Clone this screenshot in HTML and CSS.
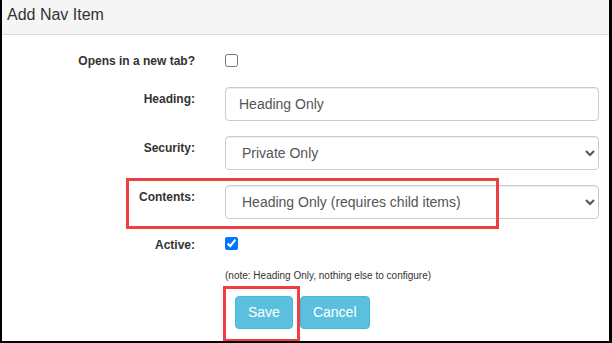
FILE: index.html
```html
<!DOCTYPE html>
<html lang="en">
<head>
    <meta charset="UTF-8">
    <title>Add Nav Item</title>
    <link rel="stylesheet" href="styles.css">
</head>
<body>
    <div class="modal-frame">
        <div class="modal-header">
            <h4 class="modal-title">Add Nav Item</h4>
        </div>

        <form class="nav-form">
            <div class="form-row row-check">
                <label class="form-label">Opens in a new tab?</label>
                <div class="form-control-col"><input type="checkbox" class="form-check"></div>
            </div>
            <div class="form-row">
                <label class="form-label">Heading:</label>
                <div class="form-control-col"><input type="text" class="form-input" value="Heading Only"></div>
            </div>
            <div class="form-row">
                <label class="form-label">Security:</label>
                <div class="form-control-col">
                    <select class="form-input form-select">
                        <option>Private Only</option>
                    </select>
                </div>
            </div>
            <div class="form-row row-contents">
                <label class="form-label">Contents:</label>
                <div class="form-control-col">
                    <select class="form-input form-select">
                        <option>Heading Only (requires child items)</option>
                    </select>
                </div>
                <span class="highlight-box highlight-contents"></span>
            </div>
            <div class="form-row row-check row-active">
                <label class="form-label">Active:</label>
                <div class="form-control-col"><input type="checkbox" class="form-check" checked></div>
            </div>
            <div class="form-row row-note">
                <span></span>
                <p class="form-note">(note: Heading Only, nothing else to configure)</p>
            </div>
            <div class="form-row row-actions">
                <span></span>
                <div class="action-buttons">
                    <button type="button" class="btn-info">Save</button>
                    <button type="button" class="btn-info">Cancel</button>
                    <span class="highlight-box highlight-save"></span>
                </div>
            </div>
        </form>
    </div>
</body>
</html>
```

FILE: styles.css
```css
:root {
    --text-color: #333; --input-text: #555;
    --input-border: #ccc; --info-bg: #5bc0de; --info-border: #46b8da;
    --highlight: #ef3f42;
}
* { margin: 0; padding: 0; box-sizing: border-box; }
body { font-family: "Liberation Sans", Arial, sans-serif; color: var(--text-color); background: #fff; width: 612px; height: 343px; overflow: hidden; }

.modal-frame {
    width: 612px; height: 343px; background: #fff; position: relative;
    border-left: 2px solid #000; border-right: 3px solid #000; border-bottom: 2px solid #000;
    overflow: hidden;
}
.modal-header { height: 35px; background: #f5f5f5; border-bottom: 1px solid #ddd; padding: 0 5px; }
.modal-title { font-size: 16px; font-weight: 400; line-height: 18px; padding-top: 6px; color: #333; }

.nav-form { padding-top: 19px; }
.form-row {
    display: grid; grid-template-columns: 193px 374px; column-gap: 30px;
    align-items: start; margin-bottom: 15px; position: relative;
}
.form-label { font-size: 12px; font-weight: 700; line-height: 17px; text-align: right; padding-top: 4px; }
.row-check { height: 13px; margin-bottom: 20px; }
.row-check .form-label { padding-top: 0; line-height: 15px; }
.row-contents { margin-bottom: 18px; }
.row-active { margin-bottom: 0; }
.row-active .form-label { padding-top: 1px; }

.form-check { display: block; width: 13px; height: 13px; margin: 0; }
.form-input {
    display: block; width: 100%; height: 34px; padding: 6px 13px; font-family: inherit;
    font-size: 14px; color: var(--input-text); background: #fff;
    border: 1px solid var(--input-border); border-radius: 4px;
    box-shadow: inset 0 1px 1px rgba(0,0,0,0.075);
}
.form-select { padding: 6px 12px; }

.row-note { margin-top: 20px; margin-bottom: 14px; }
.form-note { font-size: 10px; line-height: 12px; color: #333; }

.action-buttons { display: flex; gap: 7px; margin-left: 10px; position: relative; }
.btn-info {
    height: 33px; padding: 6px 12px; font-family: inherit; font-size: 14px; line-height: 19px;
    color: #fff; background: var(--info-bg); border: 1px solid var(--info-border); border-radius: 4px;
}

/* red callouts drawn over the form */
.highlight-box { position: absolute; border: 3px solid var(--highlight); pointer-events: none; }
.highlight-contents { left: 124px; top: -7px; width: 373px; height: 51px; }
.highlight-save { left: -12px; top: -10px; width: 77px; height: 56px; }
```
